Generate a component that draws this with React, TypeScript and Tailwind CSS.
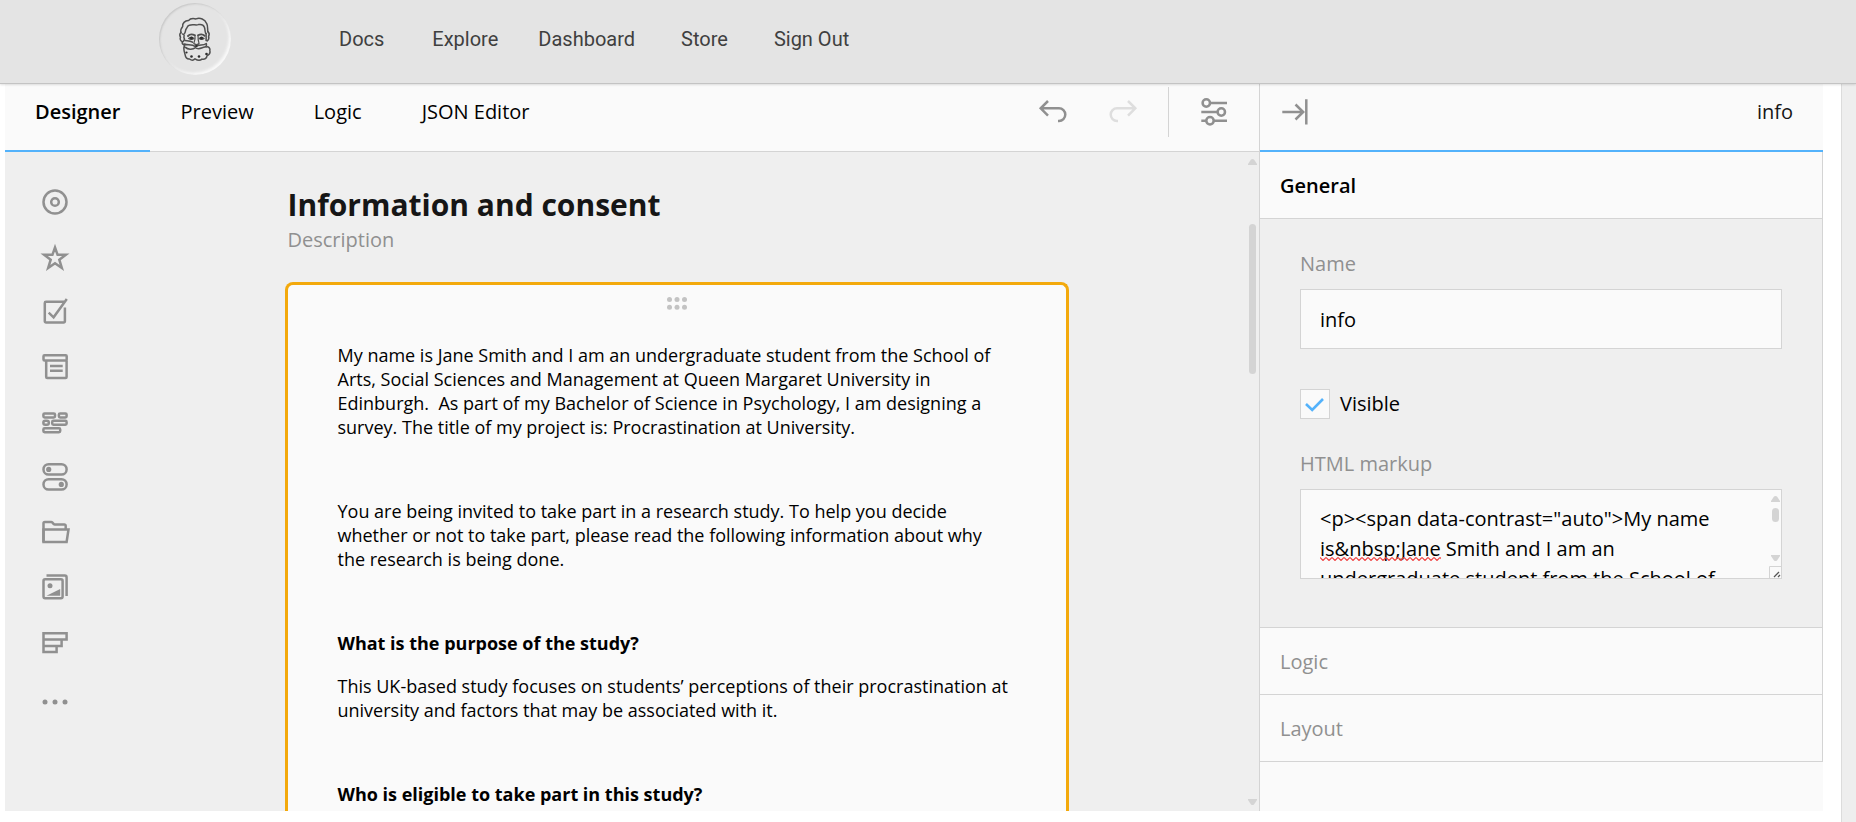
import type { ReactNode } from "react";

const navGroups = [
  { id: "public", gap: "gap-12", links: ["Docs", "Explore"] },
  { id: "account", gap: "gap-[46px]", links: ["Dashboard", "Store", "Sign Out"] },
];
const tabs = ["Designer", "Preview", "Logic", "JSON Editor"];

function Icon({ children }: { children: ReactNode }) {
  return (
    <svg
      viewBox="0 0 30 30"
      className="size-[30px] shrink-0"
      fill="none"
      stroke="currentColor"
      strokeWidth="2.5"
      aria-hidden="true"
    >
      {children}
    </svg>
  );
}

const tools: { label: string; art: ReactNode }[] = [
  {
    label: "Radio Button Group",
    art: (
      <>
        <circle cx="15" cy="15" r="11.5" />
        <circle cx="15" cy="15" r="3.8" />
      </>
    ),
  },
  {
    label: "Rating Scale",
    art: <path d="M15 5.5l2.6 7.3h8.2l-6.5 4.900 2.500 8.300L15 21.200 8.200 26l2.500-8.300-6.500-4.900h8.200z" />,
  },
  {
    label: "Checkboxes",
    art: (
      <>
        <path d="M24 4.800H6A1.200 1.200 0 0 0 4.800 6v18.200a1.200 1.200 0 0 0 1.200 1.200h17.700a1.200 1.200 0 0 0 1.200-1.200V10.500" />
        <path d="M8.700 15.700l4.900 4.600L26.800 2" />
      </>
    ),
  },
  {
    label: "Dropdown",
    art: (
      <>
        <rect x="3.500" y="3.300" width="23.200" height="5.200" rx="1" />
        <path d="M6.200 8.500v16.600a1 1 0 0 0 1 1h18.400a1 1 0 0 0 1-1V8.500M10 14h12.700M10 18.800h12.700" />
      </>
    ),
  },
  {
    label: "Multi-Select Dropdown",
    art: (
      <>
        <rect x="3.400" y="6.400" width="11.600" height="4" rx="1.200" />
        <rect x="18.900" y="6.400" width="7.700" height="4" rx="1.200" />
        <rect x="3.400" y="13.800" width="5.400" height="4" rx="1.800" />
        <rect x="12.200" y="13.800" width="14.400" height="4" rx="1.200" />
        <rect x="3.400" y="21.200" width="16.800" height="4" rx="1.200" />
      </>
    ),
  },
  {
    label: "Yes/No",
    art: (
      <>
        <rect x="3.500" y="2.200" width="23.100" height="10.300" rx="5.100" />
        <rect x="3.500" y="17.200" width="23.100" height="10.300" rx="5.100" />
        <circle cx="8.700" cy="7.400" r="2.600" fill="currentColor" stroke="none" />
        <circle cx="21.300" cy="22.400" r="2.600" fill="currentColor" stroke="none" />
      </>
    ),
  },
  {
    label: "File Upload",
    art: (
      <>
        <path d="M3.500 25V6.200a1.300 1.300 0 0 1 1.300-1.300h6.400a1.300 1.300 0 0 1 1 .4l1.600 1.800a1.300 1.300 0 0 0 1 .4h9.600a1.300 1.300 0 0 1 1.300 1.300v3.500" />
        <path d="M3.500 12.400h25l-1.900 12.500H3.500z" />
      </>
    ),
  },
  {
    label: "Image Picker",
    art: (
      <>
        <path d="M6.500 3.600h18.300a1.800 1.800 0 0 1 1.800 1.800v18.500" />
        <rect x="3.500" y="7.300" width="19.100" height="18.900" rx="1.600" />
        <circle cx="10" cy="13.700" r="2.500" fill="currentColor" stroke="none" />
        <path d="M6.500 23.800L20.200 17v6.800z" fill="currentColor" stroke="none" />
      </>
    ),
  },
  {
    label: "Ranking",
    art: <path d="M3.500 6.200h23.100v6.400H3.500zM3.500 12.600v12.500h13.100v-6.200M3.500 18.900h18.100v-6.300" />,
  },
];

function Logo() {
  return (
    <a
      href="#home"
      aria-label="Home"
      className="flex size-[72px] shrink-0 items-center justify-center rounded-full shadow-[inset_1px_1px_2px_#c6c6c6,inset_-2px_-2px_3px_#fafafa]"
    >
      <svg
        viewBox="0 0 36 46"
        className="h-[46px] w-9"
        fill="none"
        stroke="#505050"
        strokeWidth="1.5"
        strokeLinejoin="round"
        strokeLinecap="round"
        aria-hidden="true"
      >
        <path d="M4 17c-.8-3 .3-5 1.700-6.500C5 7.500 8 4.500 11.500 4.600c1.600-2.200 5-2.300 7.500-1.700 4-1.500 9 .3 10.600 4.500 1.600 2.300.8 5.300 1.200 8.200" />
        <path d="M7.500 17.500c1.300-1.500.6-3.200 1.800-4.700 1.200-1.300.8-3 3-3.600 4-1.400 6 .5 9.200-.6 3-.6 5 .4 5.900 2.600.8 2 .4 4.300 1.300 6.300" />
        <path d="M4 16.500c-1.800 1.300-1.300 3.200-.5 4.800-1 2 .4 3.700 1.700 4.300-.3 2 1 3.200 2.700 3.500M5.500 18c1.700 0 2 1.700 1.300 3.200 1 1.500.5 3.300-.6 4.300M30.800 15.600c1.500 1.200 1.600 3.200.8 4.700.6 2.200-.2 4-1.500 4.700M29.200 17.500c-.4 2.500.3 4.200-.2 7" />
        <path d="M11 20c1.700-1.900 4.500-1.900 7-.6M21 19.400c2.200-1.300 4.800-1.300 6.600.4" strokeWidth="1.900" />
        <path d="M11.500 22.400c1.600-1.200 4-1.200 5.600.1-1.800 1.300-4 1.200-5.600-.1zM22 22.500c1.600-1.300 3.600-1.200 5.200-.1-1.500 1.200-3.600 1.300-5.200.1z" strokeWidth="1.100" />
        <path d="M18 20.500c.5 2.500-.8 5-1.200 7 1.300 1.300 4.200 1.300 5.300 0-.6-2.200-1.300-4.300-1-6.800M18.200 28.700l1.300 1.500 1.200-1.500" strokeWidth="1.200" />
        <path d="M8 24.500c2 .4 5-.3 7.500 1.700M7.500 28c3 1.800 7-.4 11 2.700 3.600-3 7.600-.3 10.800-3.200.8 2.300-.6 3.700-2.800 3.800-3.300 1.200-5.500 2.500-8 .4-3 2.300-8 1.700-10-.3-1 .2-1.500-.8-1-3.400z" />
        <path d="M7 31c-.6 2.800.3 5.300 1.100 7.600.4 2.800 1.800 4.600 4.400 4.400 2 1.600 4.300 1.200 5.500-.2 2.500 1.700 5.400 1.700 7 .3 2.600.8 4.700-.8 5-3.200 2.600-1.200 3.500-3 2.800-5.300.6-2.600-1.300-4.200-3.500-3.600" />
        <g fill="#2e2e2e" stroke="none">
          <circle cx="14.500" cy="22" r="1.600" />
          <circle cx="24.500" cy="22" r="1.600" />
          <circle cx="9.500" cy="36.500" r="1.100" />
          <circle cx="14.500" cy="40.500" r="1.300" />
          <circle cx="22" cy="40.500" r="1.300" />
          <circle cx="29.500" cy="38" r="1.300" />
          <circle cx="19.500" cy="30" r="1.100" />
        </g>
      </svg>
    </a>
  );
}

function Triangle({ down = false }: { down?: boolean }) {
  return (
    <svg viewBox="0 0 9 6" className="h-1.5 w-[9px]" fill="#d4d4d4" aria-hidden="true">
      <path d={down ? "M0 0h9v1L6 5.500q-1.500 1-3 0L0 1z" : "M0 6h9V5L6 .5q-1.500-1-3 0L0 5z"} />
    </svg>
  );
}

export default function App() {
  return (
    <div className="flex h-screen min-h-[640px] flex-col overflow-hidden bg-white font-['Open_Sans',sans-serif] text-xl text-black">
      <header className="relative z-10 flex h-[84px] shrink-0 items-center border-b border-[#c3c3c3] bg-[#e4e4e4] pb-[5px] pl-[159px] shadow-[0_1px_2px_rgba(0,0,0,0.12)]">
        <Logo />
        <nav className="ml-[108px] flex gap-10 font-['Roboto',sans-serif] text-[#3f3f3f]">
          {navGroups.map((group) => (
            <div key={group.id} className={`flex ${group.gap}`}>
              {group.links.map((link) => (
                <a key={link} href={`#${link}`}>
                  {link}
                </a>
              ))}
            </div>
          ))}
        </nav>
      </header>

      <div className="flex min-h-0 flex-1">
        <div className="flex min-h-0 min-w-0 flex-1 pb-[11px] pl-[5px]">
          <main className="flex min-w-0 flex-1 flex-col bg-[#efefef]">
            <div className="flex h-[68px] shrink-0 items-stretch border-b border-[#d4d4d4] bg-[#fafafa]">
              <div role="tablist" className="flex">
                {tabs.map((tab, i) => (
                  <button
                    key={tab}
                    role="tab"
                    aria-selected={i === 0}
                    className={
                      i === 0
                        ? "-mb-px border-b-2 border-[#53b2fb] px-[30px] pb-[11px] font-semibold"
                        : "px-[30px] pb-3"
                    }
                  >
                    {tab}
                  </button>
                ))}
              </div>
              <div className="ml-auto flex items-center pr-[30px] pb-[11px] text-[#909090]">
                <button aria-label="Undo">
                  <Icon>
                    <path d="M2.800 11.300H21a6.300 6.300 0 0 1 0 12.600h-1M10 4l-7.300 7.300L10 18.600" />
                  </Icon>
                </button>
                <button aria-label="Redo" disabled className="ml-10 text-[#dedede]">
                  <Icon>
                    <path d="M27.200 11.300H9a6.300 6.300 0 0 0 0 12.600h1M20 4l7.300 7.300L20 18.600" />
                  </Icon>
                </button>
                <div className="mx-[30px] h-[50px] w-px bg-[#d4d4d4]" />
                <button aria-label="Survey settings">
                  <Icon>
                    <circle cx="7.300" cy="6" r="3.700" />
                    <circle cx="22.300" cy="15" r="3.700" />
                    <circle cx="11" cy="23.700" r="3.700" />
                    <path d="M11 6h17M2.300 15h16.300M2.300 23.700h5M14.700 23.700H28" />
                  </Icon>
                </button>
              </div>
            </div>

            <div className="flex min-h-0 flex-1">
              <div className="flex w-[100px] shrink-0 flex-col items-center gap-[25px] pt-[35px] text-[#909090]">
                {tools.map((tool) => (
                  <button key={tool.label} aria-label={tool.label}>
                    <Icon>{tool.art}</Icon>
                  </button>
                ))}
                <button aria-label="More" className="mt-[5px]">
                  <Icon>
                    <g fill="currentColor" stroke="none">
                      <circle cx="5" cy="15" r="2.500" />
                      <circle cx="15" cy="15" r="2.500" />
                      <circle cx="25" cy="15" r="2.500" />
                    </g>
                  </Icon>
                </button>
              </div>

              <div className="flex min-w-0 flex-1 flex-col items-center overflow-hidden pt-[33px]">
                <div className="w-full max-w-[784px]">
                  <h1 className="pl-[3px] text-3xl leading-10 font-bold text-[#161616]">Information and consent</h1>
                  <p className="pl-[3px] leading-[30px] text-[#909090]">Description</p>
                  <article className="mt-[27px] rounded-lg border-[3px] border-b-0 border-[#f3a90c] bg-[#fafafa] px-[50px] text-lg leading-6">
                    <div className="flex h-[58px] justify-center pt-3">
                      <svg viewBox="0 0 20 13" className="h-[13px] w-5" fill="#c3c3c3" aria-hidden="true">
                        <circle cx="2.500" cy="2.600" r="2.500" />
                        <circle cx="10" cy="2.600" r="2.500" />
                        <circle cx="17.500" cy="2.600" r="2.500" />
                        <circle cx="2.500" cy="10.200" r="2.500" />
                        <circle cx="10" cy="10.200" r="2.500" />
                        <circle cx="17.500" cy="10.200" r="2.500" />
                      </svg>
                    </div>
                    <p>
                      My name is Jane Smith and I am an undergraduate student from the School of Arts, Social
                      Sciences and Management at Queen Margaret University in Edinburgh.&nbsp; As part of my
                      Bachelor of Science in Psychology, I am designing a survey. The title of my project is:
                      Procrastination at University.
                    </p>
                    <p className="mt-[60px]">
                      You are being invited to take part in a research study. To help you decide whether or not
                      to take part, please read the following information about why
                      <br />
                      the research is being done.
                    </p>
                    <h2 className="mt-[60px] font-bold">What is the purpose of the study?</h2>
                    <p className="mt-[19px]">
                      This UK-based study focuses on students’ perceptions of their procrastination at
                      university and factors that may be associated with it.
                    </p>
                    <h2 className="mt-[60px] pb-12 font-bold">Who is eligible to take part in this study?</h2>
                  </article>
                </div>
              </div>

              <div className="flex w-[11px] shrink-0 flex-col items-center pt-[7px] pr-0.5 pb-1.5" aria-hidden="true">
                <Triangle />
                <div className="mt-[59px] h-[150px] w-[7px] rounded-full bg-[#d4d4d4]" />
                <div className="mt-auto">
                  <Triangle down />
                </div>
              </div>
            </div>
          </main>

          <aside className="flex w-[564px] shrink-0 flex-col border-l border-[#d4d4d4] bg-[#fafafa]">
            <div className="flex h-[68px] shrink-0 items-center justify-between border-b-2 border-[#53b2fb] pr-[30px] pb-2.5 pl-5">
              <button aria-label="Collapse panel" className="text-[#909090]">
                <Icon>
                  <path d="M26.300 2.300v25.200M2.300 15H23M15.500 7.500L23.200 15l-7.700 7.500" />
                </Icon>
              </button>
              <span className="text-[#161616]">info</span>
            </div>

            <div className="border-r border-[#d4d4d4]">
              <button className="flex h-[67px] w-full items-center border-b border-[#d4d4d4] px-5 pt-0.5 font-semibold">
                General
              </button>
              <div className="border-b border-[#d4d4d4] bg-[#efefef] px-10 pt-[30px] pb-12 leading-[30px]">
                <label htmlFor="name" className="block text-[#909090]">
                  Name
                </label>
                <input
                  id="name"
                  type="text"
                  defaultValue="info"
                  className="mt-2.5 block h-[60px] w-full border border-[#d4d4d4] bg-[#fafafa] px-[19px] outline-none"
                />
                <div className="mt-10 flex items-center gap-2.5">
                  <span className="relative flex size-[30px]">
                    <input
                      id="visible"
                      type="checkbox"
                      defaultChecked
                      className="peer size-[30px] appearance-none border border-[#d4d4d4] bg-[#fafafa]"
                    />
                    <svg
                      viewBox="0 0 30 30"
                      className="pointer-events-none absolute inset-0 hidden peer-checked:block"
                      fill="none"
                      stroke="#53b2fb"
                      strokeWidth="2.600"
                      aria-hidden="true"
                    >
                      <path d="M6 15l6.200 6L23 10" />
                    </svg>
                  </span>
                  <label htmlFor="visible">Visible</label>
                </div>
                <label htmlFor="markup" className="mt-[30px] block text-[#909090]">
                  HTML markup
                </label>
                <div className="relative mt-2.5">
                  <textarea
                    id="markup"
                    spellCheck={false}
                    defaultValue={
                      '<p><span data-contrast="auto">My name is&nbsp;Jane Smith and I am an undergraduate student from the School of Arts, Social Sciences'
                    }
                    className="block h-[90px] w-full resize-none overflow-hidden border border-[#d4d4d4] bg-[#fafafa] pt-3.5 pr-[30px] pl-[19px] outline-none"
                  />
                  <svg className="absolute top-[68px] left-5 h-1 w-[121px]" aria-hidden="true">
                    <defs>
                      <pattern id="squiggle" width="6" height="4" patternUnits="userSpaceOnUse">
                        <path d="M0 .5l3 3 3-3" fill="none" stroke="#f04747" strokeWidth="1.200" />
                      </pattern>
                    </defs>
                    <rect width="100%" height="4" fill="url(#squiggle)" />
                  </svg>
                  <div
                    className="absolute top-[7px] right-0.5 flex h-[65px] w-[9px] flex-col items-center"
                    aria-hidden="true"
                  >
                    <Triangle />
                    <div className="mt-1.5 h-3.5 w-[7px] rounded-full bg-[#d4d4d4]" />
                    <div className="mt-auto">
                      <Triangle down />
                    </div>
                  </div>
                  <svg
                    viewBox="0 0 12 12"
                    className="absolute right-px bottom-px size-3"
                    fill="none"
                    aria-hidden="true"
                  >
                    <path d="M0 0h12v12H0z" fill="#fafafa" />
                    <path d="M.5 12V.5H12" stroke="#d4d4d4" />
                    <path d="M5 11l5-5M9 11l2-2" stroke="#555" strokeWidth="1.300" />
                  </svg>
                </div>
              </div>
              <button className="flex h-[67px] w-full items-center border-b border-[#d4d4d4] px-5 pt-0.5 text-[#909090]">
                Logic
              </button>
              <button className="flex h-[67px] w-full items-center border-b border-[#d4d4d4] px-5 pt-0.5 text-[#909090]">
                Layout
              </button>
            </div>
          </aside>
        </div>
        <div className="ml-[18px] w-[15px] shrink-0 border-l border-[#dcdcdc] bg-[#eeeeee]" />
      </div>
    </div>
  );
}
